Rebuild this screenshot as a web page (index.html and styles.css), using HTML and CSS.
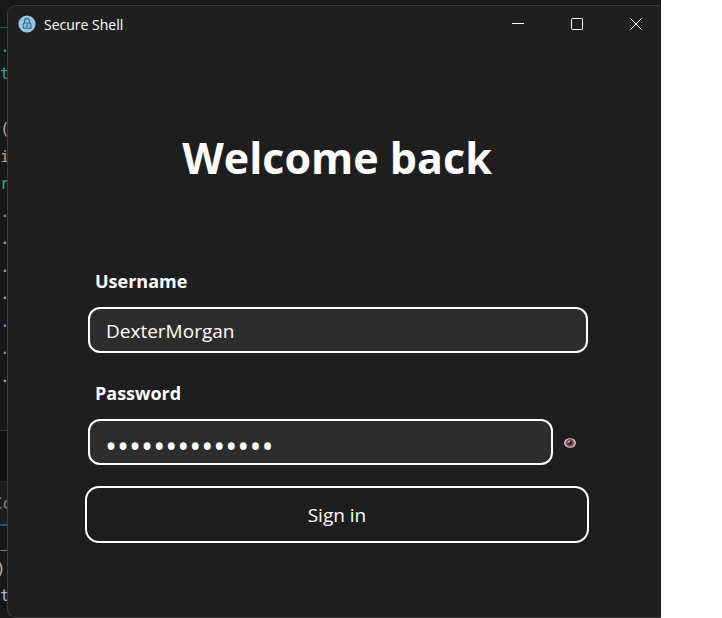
FILE: index.html
```html
<!DOCTYPE html>
<html lang="en">
<head>
<meta charset="utf-8">
<title>Secure Shell</title>
<link rel="stylesheet" href="styles.css">
</head>
<body>
<div class="desktop">
  <div class="backdrop" aria-hidden="true">
    <div class="editor">
      <span class="teal">_</span>
      <span class="teal">.</span>
      <span class="teal">t</span>
      <span></span>
      <span class="sand">(</span>
      <span class="sand">i</span>
      <span class="teal">r</span>
      <span class="blue">.</span>
      <span class="sand">.</span>
      <span class="sand">.</span>
      <span class="sand">.</span>
      <span class="blue">.</span>
      <span class="blue">.</span>
      <span class="sand">.</span>
    </div>
    <div class="panel-gap"></div>
    <div class="panel-tab">Co</div>
    <div class="terminal">
      <span>_(</span>
      <span class="shifted">)</span>
      <span>t:</span>
    </div>
  </div>
  <main class="window">
    <header class="titlebar">
      <svg class="app-icon" viewBox="0 0 18 18" aria-hidden="true">
        <circle cx="9" cy="9" r="8.6" fill="#8ecae6"/>
        <path d="M6.5 8V6.2a2.5 2.5 0 0 1 5 0V8" fill="none" stroke="#3f6582" stroke-width="1.2"/>
        <rect x="5.2" y="8" width="7.8" height="5.2" rx="1" fill="#86bdda" stroke="#3f6582" stroke-width="1.1"/>
        <path d="M9 9.7v2M8 10.7h2" stroke="#3f6582" stroke-width=".8"/>
      </svg>
      <span class="app-name">Secure Shell</span>
      <div class="controls">
        <button type="button" aria-label="Minimize"><svg viewBox="0 0 14 14"><path d="M1 6.5h12"/></svg></button>
        <button type="button" aria-label="Maximize"><svg viewBox="0 0 14 14"><rect x="1.5" y="1.5" width="11" height="11" rx="1"/></svg></button>
        <button type="button" aria-label="Close"><svg viewBox="0 0 14 14"><path d="M1.2 1.2l11.6 11.6M12.8 1.2L1.2 12.8"/></svg></button>
      </div>
    </header>
    <h1>Welcome back</h1>
    <form class="login">
      <div class="field">
        <label for="username">Username</label>
        <input id="username" type="text" value="DexterMorgan">
      </div>
      <div class="field">
        <label for="password">Password</label>
        <div class="password-row">
          <input id="password" class="masked" type="password" value="dearlydevoted1">
          <button class="reveal" type="button" aria-label="Show password">
            <svg viewBox="0 0 12 10">
              <ellipse cx="6" cy="5" rx="5.9" ry="4.8" fill="#d8cfd8"/>
              <ellipse cx="6" cy="5.2" rx="4.9" ry="4" fill="#b08a90"/>
              <circle cx="6" cy="4.8" r="3.8" fill="#8a4744"/>
              <circle cx="6" cy="4.8" r="1.9" fill="#26141c"/>
              <circle cx="5" cy="3.8" r=".9" fill="#e8dfe4"/>
            </svg>
          </button>
        </div>
      </div>
      <button class="submit" type="button">Sign in</button>
    </form>
  </main>
</div>
</body>
</html>
```
FILE: styles.css
```css
* {
  box-sizing: border-box;
}

body {
  margin: 0;
  background: #fff;
  color: #fff;
  font-family: "Open Sans", "Noto Sans", sans-serif;
}

.desktop {
  display: grid;
  grid-template-columns: 7px 1fr;
  min-height: 100vh;
  margin-right: 61px;
  padding-top: 5px;
  background: #181818;
}

.backdrop {
  display: flex;
  flex-direction: column;
  overflow: hidden;
  font: 16px/27px "DejaVu Sans Mono", monospace;
  color: #b4b4b4;
}

.editor {
  display: flex;
  flex-direction: column;
  height: 425px;
  padding-bottom: 40px;
}

.editor span {
  flex: 1;
}

.teal { color: #2fa58a; }
.sand { color: #b3a58c; }
.blue { color: #5b9bd0; }

.panel-gap {
  height: 52px;
  border-top: 1px solid #363636;
  border-bottom: 1px solid #2c2c2c;
  background: #101010;
}

.panel-tab {
  height: 44px;
  padding-top: 8px;
  border-bottom: 2px solid #1b5078;
  background: #1e1e1e;
  color: #858585;
  text-indent: -7px;
}

.terminal {
  display: flex;
  flex-direction: column;
  padding-top: 2px;
}

.shifted {
  text-indent: -4px;
}

.window {
  display: flex;
  flex-direction: column;
  min-width: 0;
  border: 1px solid #3d3d3d;
  border-right: 0;
  border-radius: 9px 3px 0 9px;
  background: #1e1e1e;
  overflow: hidden;
}

.titlebar {
  display: flex;
  align-items: center;
  height: 36px;
  padding-left: 10px;
  background: #202020;
}

.app-icon {
  width: 18px;
  height: 18px;
  margin-right: 8px;
}

.app-name {
  font-size: 14px;
}

.controls {
  display: flex;
  align-self: stretch;
  margin-left: auto;
}

.controls button {
  display: grid;
  place-items: center;
  width: 59px;
  padding: 0 0 0 9px;
  border: 0;
  background: none;
}

.controls svg {
  width: 14px;
  height: 14px;
  fill: none;
  stroke: #fff;
}

h1 {
  margin: 84px 0 0;
  padding-left: 5px;
  font-size: 43px;
  line-height: 64px;
  font-weight: 700;
  text-align: center;
}

.login {
  display: flex;
  flex-direction: column;
  margin: 77px 72px 0 77px;
}

.field {
  display: flex;
  flex-direction: column;
  margin: 0 1px 26px 3px;
}

.field label {
  margin: 0 0 12px 7px;
  font-size: 18px;
  line-height: 28px;
  font-weight: 700;
}

.field input {
  width: 100%;
  height: 46px;
  padding: 2px 16px 0;
  border: 2px solid #fff;
  border-radius: 12px;
  background: #2d2d2d;
  color: #fff;
  font: 19px "Open Sans", "Noto Sans", sans-serif;
}

.field .masked {
  padding: 7px 15px 0;
  font-size: 32px;
}

.password-row {
  display: flex;
  align-items: center;
}

.reveal {
  display: grid;
  flex: none;
  place-items: center;
  width: 35px;
  height: 46px;
  padding: 2px 2px 0 0;
  border: 0;
  background: none;
}

.reveal svg {
  width: 12px;
  height: 10px;
}

.submit {
  height: 57px;
  margin-top: -5px;
  padding-top: 2px;
  border: 2px solid #fff;
  border-radius: 14px;
  background: #1e1e1e;
  color: #fff;
  font: 19px "Open Sans", "Noto Sans", sans-serif;
}
```
